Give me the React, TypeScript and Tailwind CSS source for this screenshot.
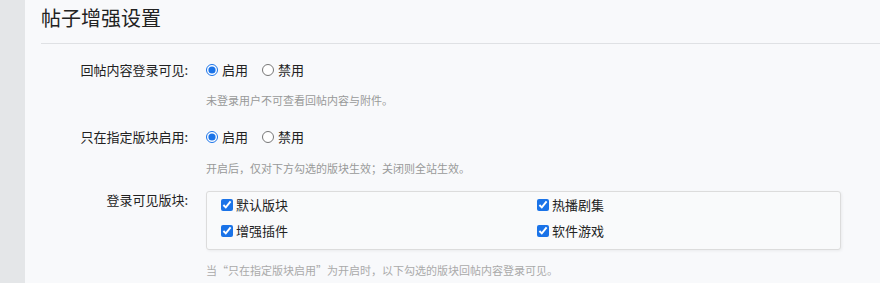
const FONT = '"Noto Sans CJK SC", "Noto Sans", sans-serif'

function Radio({ checked, label }: { checked?: boolean; label: string }) {
  return (
    <label className="flex items-center gap-[4px]">
      <input type="radio" defaultChecked={checked} className="m-0 h-[12px] w-[12px] accent-[#1a73e8]" />
      <span>{label}</span>
    </label>
  )
}

function Check({ label }: { label: string }) {
  return (
    <label className="flex items-center gap-[3px]">
      <input type="checkbox" defaultChecked className="m-0 h-[12px] w-[12px] accent-[#1a73e8]" />
      <span>{label}</span>
    </label>
  )
}

export default function App() {
  return (
    <div className="flex h-[283px] w-[880px] overflow-hidden bg-[#f8f9fb] text-[13px] text-[#222]" style={{ fontFamily: FONT }}>
      {/* Left rail */}
      <div className="w-[25px] shrink-0 bg-[#e4e6e8]" />

      <div className="flex-1 pl-[16px]">
        <h2 className="pt-[5px] text-[20px] leading-[26px] text-[#222]">帖子增强设置</h2>
        <div className="mt-[12px] border-b border-[#dfe1e4]" />

        <div className="mt-[18px] grid grid-cols-[147px_1fr] gap-x-[18px] leading-[16px]">
          {/* row 1 */}
          <div className="text-right">回帖内容登录可见:</div>
          <div className="flex gap-[14px]">
            <Radio checked label="启用" />
            <Radio label="禁用" />
          </div>
          <div />
          <div className="mt-[14px] text-[11px] text-[#999]">未登录用户不可查看回帖内容与附件。</div>

          {/* row 2 */}
          <div className="mt-[21px] text-right">只在指定版块启用:</div>
          <div className="mt-[21px] flex gap-[14px]">
            <Radio checked label="启用" />
            <Radio label="禁用" />
          </div>
          <div />
          <div className="mt-[15px] text-[11px] text-[#999]">开启后，仅对下方勾选的版块生效；关闭则全站生效。</div>

          {/* row 3 */}
          <div className="mt-[16px] text-right">登录可见版块:</div>
          <div className="mt-[15px] mr-[39px] grid grid-cols-[316px_1fr] gap-y-[10px] rounded-[3px] border border-[#dcdcdc] bg-[#f9fafb] px-[14px] pt-[5px] pb-[10px] shadow-[1px_1px_3px_rgba(0,0,0,0.06)]">
            <Check label="默认版块" />
            <Check label="热播剧集" />
            <Check label="增强插件" />
            <Check label="软件游戏" />
          </div>
          <div />
          <div className="mt-[12px] text-[11px] text-[#aaa]">当“只在指定版块启用”为开启时，以下勾选的版块回帖内容登录可见。</div>
        </div>
      </div>
    </div>
  )
}
